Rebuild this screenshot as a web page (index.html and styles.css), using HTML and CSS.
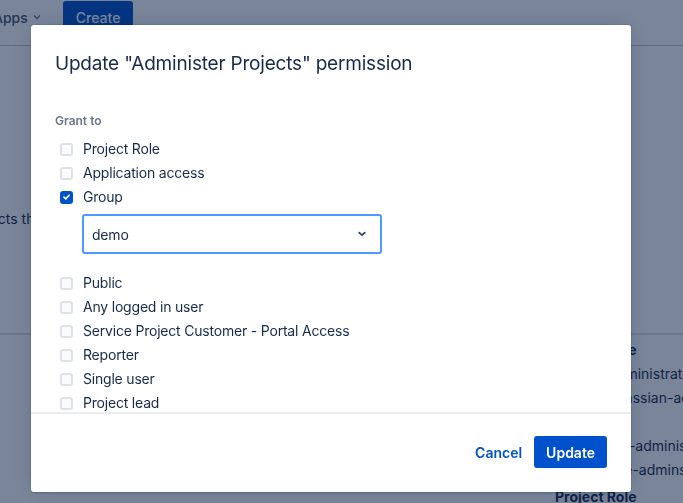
FILE: index.html
```html
<!DOCTYPE html>
<html lang="en">
<head>
<meta charset="utf-8">
<title>Update permission</title>
<link rel="stylesheet" href="styles.css">
</head>
<body>
<div class="page">
  <header class="page-header">
    <span class="nav-item">Apps <svg class="nav-chevron" width="8" height="6" viewBox="0 0 8 6"><path d="M1 1.5 L4 4.5 L7 1.5" fill="none" stroke="currentColor" stroke-width="1.3"/></svg></span>
    <span class="create-btn">Create</span>
  </header>
  <main class="content">
    <p class="intro">Manage which users can administer projects that use this scheme.</p>
    <div class="table-rule"></div>
    <div class="granted">
      <div class="granted-head">Project Role</div>
      <ul class="granted-list">
        <li class="granted-item">administrators</li>
        <li class="granted-item">atlassian-addons-admin</li>
      </ul>
      <div class="granted-head">Group</div>
      <ul class="granted-list">
        <li class="granted-item">jira-administrators</li>
        <li class="granted-item">site-admins</li>
      </ul>
      <div class="granted-head granted-head-next">Project Role</div>
    </div>
  </main>
</div>

<div class="overlay">
  <section class="modal" role="dialog" aria-labelledby="modal-title">
    <div class="modal-header">
      <h1 id="modal-title" class="modal-title">Update "Administer Projects" permission</h1>
    </div>
    <div class="modal-body">
      <div class="field-label">Grant to</div>
      <div class="option"><span class="box"></span><span class="option-label">Project Role</span></div>
      <div class="option"><span class="box"></span><span class="option-label">Application access</span></div>
      <div class="option"><span class="box box-checked"><svg width="10" height="10" viewBox="0 0 10 10"><path d="M2.2 5.2 L4.2 7.1 L7.9 3" fill="none" stroke="#fff" stroke-width="1.8" stroke-linecap="round" stroke-linejoin="round"/></svg></span><span class="option-label">Group</span></div>
      <div class="select">
        <span class="select-value">demo</span>
        <svg class="select-chevron" width="10" height="8" viewBox="0 0 10 8"><path d="M2.2 2.6 L5 5.2 L7.8 2.6" fill="none" stroke="#344563" stroke-width="1.8" stroke-linecap="round" stroke-linejoin="round"/></svg>
      </div>
      <div class="option option-after-select"><span class="box"></span><span class="option-label">Public</span></div>
      <div class="option"><span class="box"></span><span class="option-label">Any logged in user</span></div>
      <div class="option"><span class="box"></span><span class="option-label">Service Project Customer - Portal Access</span></div>
      <div class="option"><span class="box"></span><span class="option-label">Reporter</span></div>
      <div class="option"><span class="box"></span><span class="option-label">Single user</span></div>
      <div class="option"><span class="box"></span><span class="option-label">Project lead</span></div>
      <div class="option"><span class="box"></span><span class="option-label">Current assignee</span></div>
    </div>
    <div class="modal-footer">
      <button class="btn btn-subtle" type="button">Cancel</button>
      <button class="btn btn-primary" type="button">Update</button>
    </div>
  </section>
</div>
</body>
</html>
```

FILE: styles.css
```css
* { box-sizing: border-box; }

html, body {
  margin: 0;
  padding: 0;
  height: 100%;
  overflow: hidden;
}

body {
  font-family: Inter, "Noto Sans", "Liberation Sans", sans-serif;
  color: #172b4d;
  background: #ffffff;
  font-size: 14px;
}

/* ---------- background page ---------- */
.page-header {
  height: 46px;
  border-bottom: 1px solid #c1c7d0;
  display: flex;
  align-items: flex-start;
  gap: 22px;
  padding-top: 1px;
}

.nav-item {
  margin-left: -7px;
  height: 32px;
  display: flex;
  align-items: center;
  gap: 5px;
  color: #42526e;
  font-weight: 500;
}

.nav-chevron { color: #6b778c; }

.create-btn {
  height: 32px;
  padding: 0 13px;
  display: flex;
  align-items: center;
  background: #0052cc;
  color: #fff;
  border-radius: 3px;
  font-weight: 500;
}

.intro {
  margin: 163px 0 0 -278px;
  line-height: 20px;
  white-space: nowrap;
}

.table-rule {
  margin-top: 104px;
  height: 2px;
  background: #dfe1e6;
}

.granted {
  padding-left: 555px;
  padding-top: 3px;
  line-height: 24px;
  white-space: nowrap;
}

.granted-head { font-weight: 700; }
.granted-head-next { margin-top: 3px; }

.granted-list {
  list-style: none;
  margin: 0;
  padding: 0 0 0 54px;
}

/* ---------- overlay + modal ---------- */
.overlay {
  position: fixed;
  inset: 0;
  background: rgba(9, 30, 66, 0.54);
}

.modal {
  position: absolute;
  left: 31px;
  top: 25px;
  width: 600px;
  height: 467px;
  background: #fff;
  border-radius: 3px;
  box-shadow: 0 0 0 1px rgba(9, 30, 66, 0.08), 0 2px 1px rgba(9, 30, 66, 0.08), 0 0 20px -6px rgba(9, 30, 66, 0.31);
  display: flex;
  flex-direction: column;
}

.modal-header {
  padding: 27px 24px 19px;
  height: 70px;
  flex: none;
}

.modal-title {
  margin: 0;
  font-size: 19px;
  line-height: 24px;
  font-weight: 400;
  color: #172b4d;
  letter-spacing: -0.2px;
}

.modal-body {
  flex: 1;
  overflow: hidden;
  padding: 18px 24px 0;
}

.field-label {
  font-size: 12px;
  line-height: 16px;
  font-weight: 600;
  color: #6b778c;
  margin-bottom: 8px;
}

.option {
  height: 24px;
  display: flex;
  align-items: center;
}

.box {
  width: 13px;
  height: 13px;
  margin: 0 10px 0 5px;
  border: 2px solid #dfe1e6;
  background: #fafbfc;
  border-radius: 3px;
  display: flex;
  align-items: center;
  justify-content: center;
  flex: none;
}

.box-checked {
  background: #0052cc;
  border-color: #0052cc;
}

.option-label {
  line-height: 20px;
  color: #172b4d;
  letter-spacing: -0.2px;
}

.select {
  margin: 5px 0 0 27px;
  width: 300px;
  height: 40px;
  border: 2px solid #4c9aff;
  border-radius: 3px;
  background: #fff;
  display: flex;
  align-items: center;
  justify-content: space-between;
  padding: 0 13px 0 8px;
}

.select-value { color: #172b4d; letter-spacing: -0.2px; }

.option-after-select { margin-top: 17px; }

.modal-footer {
  flex: none;
  border-top: 2px solid #ebecf0;
  height: 80px;
  padding: 22px 24px 24px;
  display: flex;
  justify-content: flex-end;
  align-items: flex-start;
  gap: 1px;
}

.btn {
  font-family: inherit;
  font-size: 14px;
  font-weight: 600;
  height: 32px;
  padding: 0 12px;
  border: none;
  border-radius: 3px;
  cursor: pointer;
}

.btn-subtle {
  background: transparent;
  color: #0052cc;
  padding: 0 11px;
}

.btn-primary {
  background: #0052cc;
  color: #fff;
}
```
